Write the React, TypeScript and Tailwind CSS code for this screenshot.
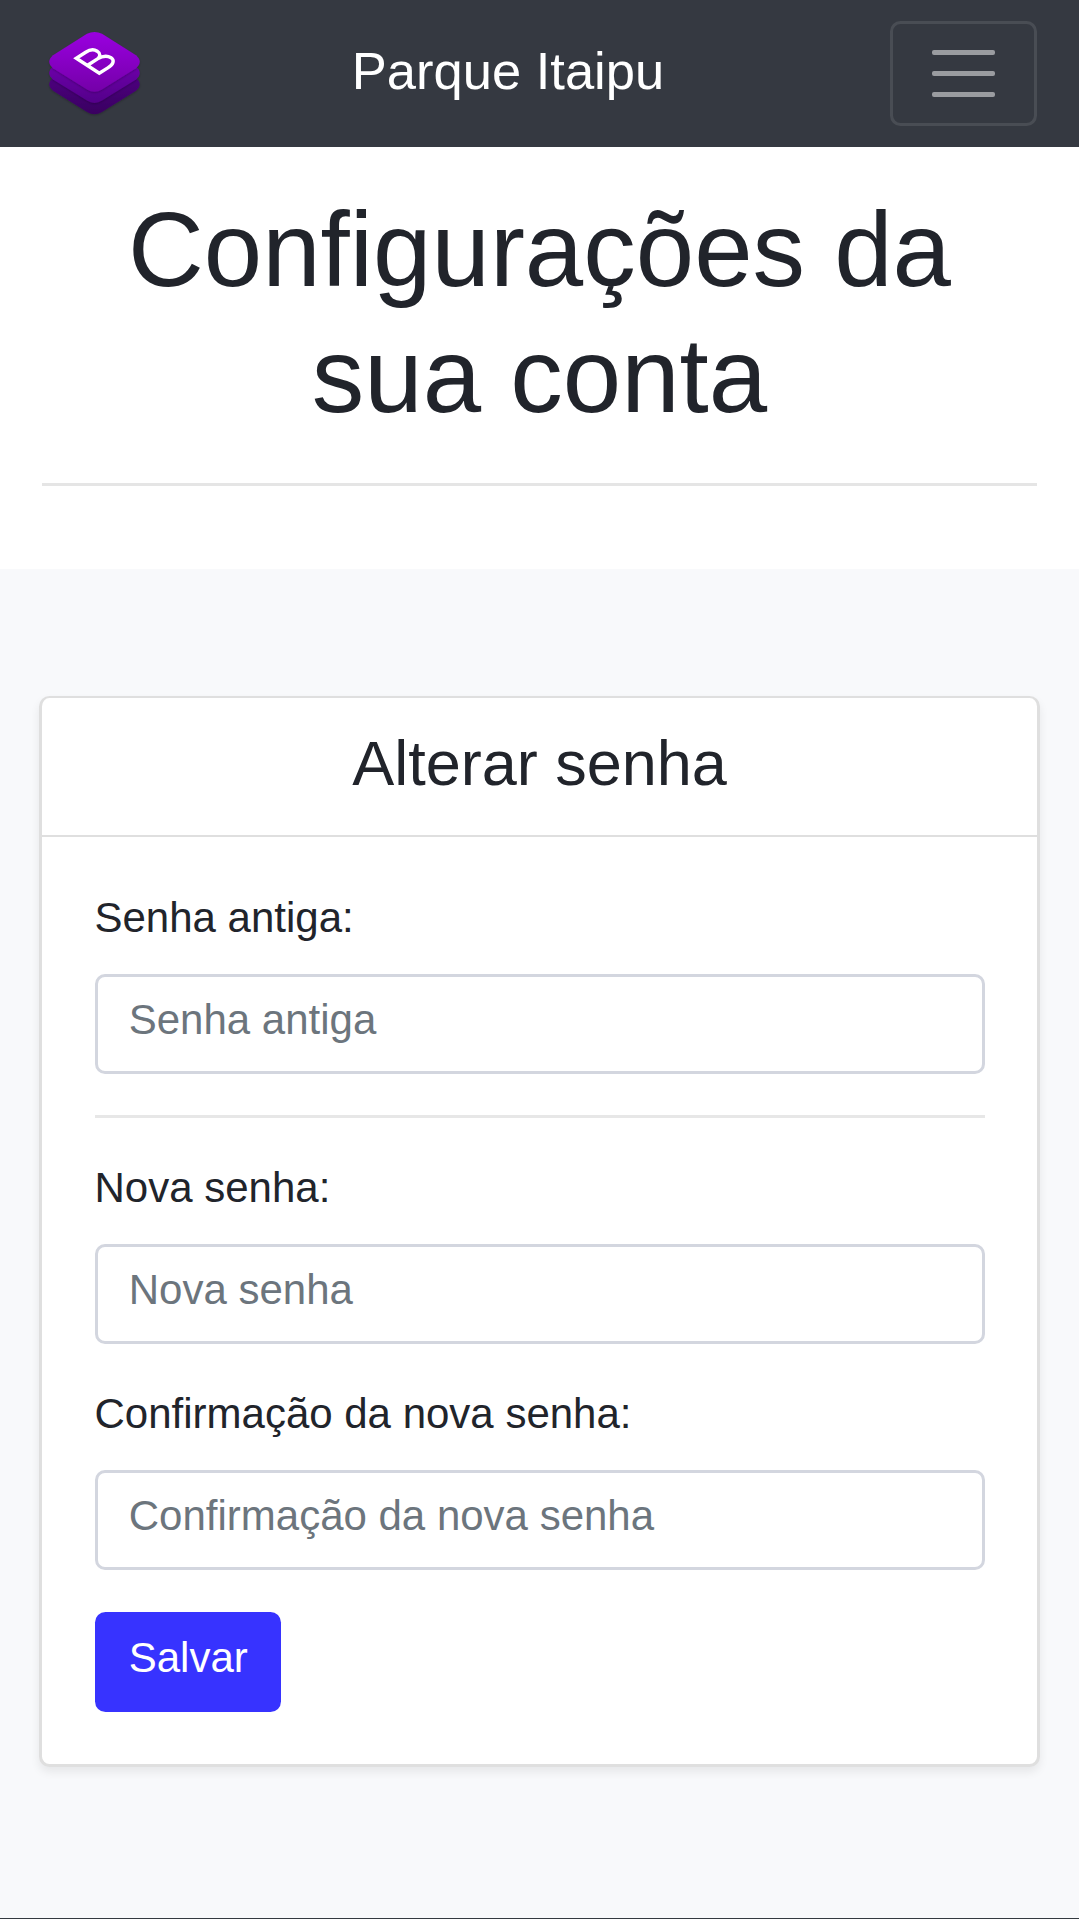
function Logo() {
  return (
    <svg className="block h-[105px] w-[105px]" viewBox="0 0 105 105">
      <defs>
        <linearGradient id="top" x1="0" y1="0" x2="0" y2="1">
          <stop offset="0" stopColor="#9a00e0" />
          <stop offset="1" stopColor="#7400a8" />
        </linearGradient>
        <linearGradient id="mid" x1="0" y1="0" x2="0" y2="1">
          <stop offset="0.4" stopColor="#6b00a8" />
          <stop offset="1" stopColor="#54008a" />
        </linearGradient>
        <linearGradient id="low" x1="0" y1="0" x2="0" y2="1">
          <stop offset="0.4" stopColor="#4c007e" />
          <stop offset="1" stopColor="#390060" />
        </linearGradient>
        <filter id="shade" x="-20%" y="-20%" width="140%" height="140%">
          <feDropShadow dx="0" dy="1" stdDeviation="0.8" floodColor="#000" floodOpacity="0.25" />
        </filter>
        <path id="tile" d="M45 12.800Q52.500 9 60 12.800L94 34.200Q101.500 40.800 94 47.200L60 68.400Q52.500 73 45 68.400L11 47.200Q3.500 40.800 11 34.200Z" />
      </defs>
      <g filter="url(#shade)"><use href="#tile" y="22.500" fill="url(#low)" /></g>
      <g filter="url(#shade)"><use href="#tile" y="11.200" fill="url(#mid)" /></g>
      <g filter="url(#shade)"><use href="#tile" fill="url(#top)" /></g>
      <path d="M34.300 37.300L57.300 52.200L65.800 46.900C71.500 43.300 72.800 39.300 69 36.700C65 34.200 60.300 35 55.500 37.800C58.500 35.600 58.700 32.500 55.200 30.200C52 28.200 47.700 28.600 43.700 31.200ZM46 44L55.500 37.800" fill="none" stroke="#fff" strokeWidth="3.400" strokeLinejoin="miter" strokeMiterlimit="2.500" />
    </svg>
  );
}

function Field({ id, label }: { id: string; label: string }) {
  return (
    <div>
      <label htmlFor={id} className="block h-[63px] leading-[63px]">{label}:</label>
      <input
        id={id}
        type="password"
        placeholder={label}
        className="mt-[25px] block h-[100px] w-full rounded-[10px] border-[3px] border-[#d3d6df] bg-white px-[31.250px] pb-[8px] placeholder:text-[#6c757d] placeholder:opacity-100"
      />
    </div>
  );
}

export default function App() {
  return (
    <div className="flex min-h-[1919px] flex-col bg-[#f8f9fb] font-['Liberation_Sans',Arial,sans-serif] text-[42px] text-[#21242b]">
      <nav className="flex h-[147px] items-center justify-between bg-[#353941] px-[42px]">
        <Logo />
        <span className="mt-[-7px] pr-[21px] text-[52.5px] leading-[79px] text-white">Parque Itaipu</span>
        <button className="flex h-[105px] w-[147px] flex-col items-center justify-center gap-[16px] rounded-[10.500px] border-[3px] border-white/10" aria-label="Menu">
          <span className="h-[5px] w-[63px] rounded-[2px] bg-white/50" />
          <span className="h-[5px] w-[63px] rounded-[2px] bg-white/50" />
          <span className="h-[5px] w-[63px] rounded-[2px] bg-white/50" />
        </button>
      </nav>
      <header className="h-[422px] bg-white px-[42px] pt-[40px] text-center">
        <h1 className="text-[105px] leading-[126px]">Configurações da<br />sua conta</h1>
        <hr className="mt-[44px] border-t-[3px] border-[#e5e5e5]" />
      </header>
      <main className="flex-1 px-[39px] pt-[127px]">
        <section className="rounded-[10.500px] border-x-[3px] border-t-[2px] border-b-[3px] border-[#dfdfdf] bg-white shadow-[0_5px_10px_rgba(0,0,0,0.075)]">
          <h4 className="h-[139px] border-b-[2px] border-[#dfdfdf] pt-[27px] text-center text-[63px] leading-[76px]">Alterar senha</h4>
          <form className="px-[52.500px] pt-[49px] pb-[52px]">
            <Field id="old" label="Senha antiga" />
            <hr className="mt-[41px] mb-[38px] border-t-[3px] border-[#e7e7e7]" />
            <Field id="new" label="Nova senha" />
            <div className="h-[38px]" />
            <Field id="confirm" label="Confirmação da nova senha" />
            <button type="button" className="mt-[41.500px] block h-[100px] w-[186.500px] rounded-[10.500px] bg-[#3733ff] pb-[8px] pl-[1px] text-white">Salvar</button>
            <div className="h-[0.5px]" />
          </form>
        </section>
      </main>
      <footer className="h-px bg-[#343a40]" />
    </div>
  );
}
